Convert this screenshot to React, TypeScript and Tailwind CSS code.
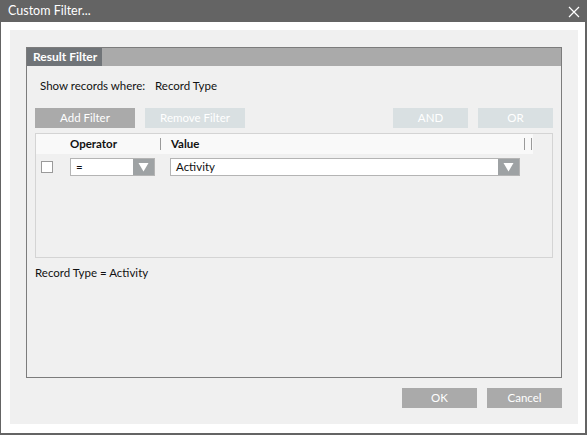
import React from 'react';

const font = { fontFamily: 'Lato, "Open Sans", sans-serif' };

function Arrow() {
  return (
    <div className="w-[21px] h-full bg-[#9ea2a4] flex items-center justify-center">
      <svg width="11" height="10" viewBox="0 0 11 10">
        <path d="M0.5 1 L10.5 1 L5.5 9.5 Z" fill="#ffffff" />
      </svg>
    </div>
  );
}

function Select({ value, width }: { value: string; width: string }) {
  return (
    <div className={`${width} h-[18px] bg-white border border-[#b4b4b4] flex items-stretch`}>
      <div className="flex-1 pl-[5px] text-[11.5px] leading-[16px] text-[#111]">{value}</div>
      <Arrow />
    </div>
  );
}

export default function App() {
  return (
    <div
      className="w-[587px] h-[435px] bg-white flex flex-col border-l border-r-2 border-b-2 border-[#646464] text-[11.5px] text-[#111]"
      style={font}
    >
      {/* Title bar */}
      <div className="h-[22px] -mx-px bg-[#646464] flex items-center justify-between pl-[8px] pr-[6px] text-white text-[12.5px]">
        <span>Custom Filter...</span>
        <svg width="12" height="12" viewBox="0 0 12 12" className="mt-[2px]">
          <path d="M1 1 L11 11 M11 1 L1 11" stroke="#ffffff" strokeWidth="1.2" />
        </svg>
      </div>

      {/* Body panel */}
      <div className="ml-[9px] mt-[8px] w-[568px] h-[394px] bg-[#f0f0f0] flex flex-col pl-[16px] pt-[17px]">
        <div className="w-[536px] h-[331px] border border-[#7c7c7c] flex flex-col">
          <div className="h-[18px] bg-[#aaaaaa] flex">
            <div className="w-[75px] bg-[#707478] text-white text-[12px] font-bold pl-[6px] leading-[18px] whitespace-nowrap overflow-hidden">
              Result Filter
            </div>
          </div>

          <div className="flex pl-[13px] mt-[12px] leading-[16px]">
            <span className="w-[115px] shrink-0">Show records where:</span>
            <span>Record Type</span>
          </div>

          <div className="flex mt-[14px] px-[8px] h-[20px] text-white">
            <div className="w-[100px] bg-[#aaaaaa] flex items-center justify-center">Add Filter</div>
            <div className="w-[100px] ml-[10px] bg-[#d9e0e2] flex items-center justify-center">Remove Filter</div>
            <div className="w-[75px] ml-auto bg-[#d9e0e2] flex items-center justify-center">AND</div>
            <div className="w-[75px] ml-[10px] bg-[#d9e0e2] flex items-center justify-center">OR</div>
          </div>

          <div className="mx-[8px] mt-[5px] h-[125px] border border-[#d4d4d4] flex flex-col">
            <div className="w-[497px] h-[20px] bg-[#f9f9f9] flex items-center font-bold">
              <span className="ml-[34px] w-[90px]">Operator</span>
              <span className="w-px h-[12px] bg-[#9a9a9a]" />
              <span className="ml-[10px] w-[353px]">Value</span>
              <span className="w-px h-[12px] bg-[#9a9a9a]" />
              <span className="ml-[6px] w-px h-[12px] bg-[#9a9a9a]" />
            </div>
            <div className="flex items-center mt-[4px]">
              <div className="ml-[5px] w-[12px] h-[12px] bg-white border border-[#9a9a9a]" />
              <div className="ml-[17px]">
                <Select value="=" width="w-[85px]" />
              </div>
              <div className="ml-[15px]">
                <Select value="Activity" width="w-[350px]" />
              </div>
            </div>
          </div>

          <div className="pl-[8px] mt-[6px]">Record Type = Activity</div>
        </div>

        <div className="flex justify-end w-[536px] mt-[10px] h-[20px] text-white">
          <div className="w-[75px] bg-[#aaaaaa] flex items-center justify-center">OK</div>
          <div className="w-[75px] ml-[10px] bg-[#aaaaaa] flex items-center justify-center">Cancel</div>
        </div>
      </div>
    </div>
  );
}
